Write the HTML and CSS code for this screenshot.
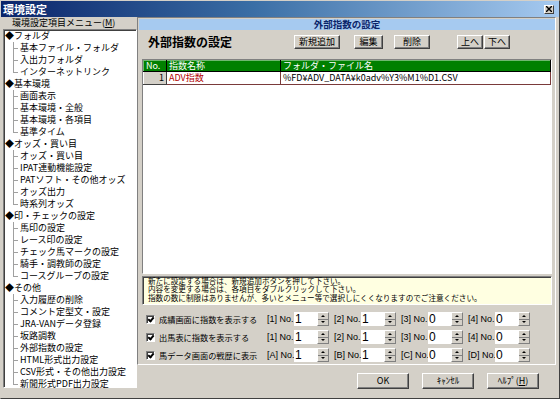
FILE: index.html
```html
<!DOCTYPE html>
<html lang="ja">
<head>
    <meta charset="UTF-8">
    <title>環境設定</title>
    <link rel="stylesheet" href="styles.css">
</head>
<body>
    <div class="window">
        <div class="titlebar">
            <span class="title">環境設定</span>
            <span class="close"><svg width="6" height="6" viewBox="0 0 6 6"><path d="M0 0L6 6M6 0L0 6" stroke="#000" stroke-width="1.4"/></svg></span>
        </div>
        <div class="main">
            <div class="menu-col">
                <div class="menu-label">環境設定項目メニュー(<u>M</u>)</div>
                <ul class="tree">
                    <li class="group">◆フォルダ
                        <ul>
                            <li>基本ファイル・フォルダ</li>
                            <li>入出力フォルダ</li>
                            <li>インターネットリンク</li>
                        </ul>
                    </li>
                    <li class="group">◆基本環境
                        <ul>
                            <li>画面表示</li>
                            <li>基本環境・全般</li>
                            <li>基本環境・各項目</li>
                            <li>基準タイム</li>
                        </ul>
                    </li>
                    <li class="group">◆オッズ・買い目
                        <ul>
                            <li>オッズ・買い目</li>
                            <li>IPAT連動機能設定</li>
                            <li>PATソフト・その他オッズ</li>
                            <li>オッズ出力</li>
                            <li>時系列オッズ</li>
                        </ul>
                    </li>
                    <li class="group">◆印・チェックの設定
                        <ul>
                            <li>馬印の設定</li>
                            <li>レース印の設定</li>
                            <li>チェック馬マークの設定</li>
                            <li>騎手・調教師の設定</li>
                            <li>コースグループの設定</li>
                        </ul>
                    </li>
                    <li class="group">◆その他
                        <ul>
                            <li>入力履歴の削除</li>
                            <li>コメント定型文・設定</li>
                            <li>JRA-VANデータ登録</li>
                            <li>坂路調教</li>
                            <li>外部指数の設定</li>
                            <li>HTML形式出力設定</li>
                            <li>CSV形式・その他出力設定</li>
                            <li>新聞形式PDF出力設定</li>
                        </ul>
                    </li>
                </ul>
            </div>

            <div class="content-col">
                <div class="panel">
                    <div class="panel-head">外部指数の設定</div>
                    <div class="toolbar">
                        <h1>外部指数の設定</h1>
                        <button class="btn btn-add">新規追加</button>
                        <button class="btn btn-edit">編集</button>
                        <button class="btn btn-del">削除</button>
                        <button class="btn btn-up">上へ</button>
                        <button class="btn btn-down">下へ</button>
                    </div>
                    <div class="list">
                        <table>
                            <tr class="head">
                                <th class="c-no">No.</th>
                                <th class="c-name">指数名称</th>
                                <th class="c-path">フォルダ・ファイル名</th>
                            </tr>
                            <tr class="row">
                                <td class="c-no">1</td>
                                <td class="c-name">ADV指数</td>
                                <td class="c-path">%FD¥ADV_DATA¥k0adv%Y3%M1%D1.CSV</td>
                            </tr>
                        </table>
                    </div>
                    <div class="note">
                        新たに設定する場合は、新規追加ボタンを押して下さい。<br>
                        内容を変更する場合は、各項目をダブルクリックして下さい。<br>
                        指数の数に制限はありませんが、多いとメニュー等で選択しにくくなりますのでご注意ください。
                    </div>
                    <div class="opts">
                        <div class="opt-row">
                            <label class="opt-label"><span class="check"></span>成績画面に指数を表示する</label>
                            <span class="spin-group"><span class="spin-label">[1] No.</span><span class="num">1</span><span class="spin"></span></span>
                            <span class="spin-group"><span class="spin-label">[2] No.</span><span class="num">1</span><span class="spin"></span></span>
                            <span class="spin-group"><span class="spin-label">[3] No.</span><span class="num">0</span><span class="spin"></span></span>
                            <span class="spin-group"><span class="spin-label">[4] No.</span><span class="num">0</span><span class="spin"></span></span>
                        </div>
                        <div class="opt-row">
                            <label class="opt-label"><span class="check"></span>出馬表に指数を表示する</label>
                            <span class="spin-group"><span class="spin-label">[1] No.</span><span class="num">1</span><span class="spin"></span></span>
                            <span class="spin-group"><span class="spin-label">[2] No.</span><span class="num">1</span><span class="spin"></span></span>
                            <span class="spin-group"><span class="spin-label">[3] No.</span><span class="num">0</span><span class="spin"></span></span>
                            <span class="spin-group"><span class="spin-label">[4] No.</span><span class="num">0</span><span class="spin"></span></span>
                        </div>
                        <div class="opt-row">
                            <label class="opt-label"><span class="check"></span>馬データ画面の戦歴に表示</label>
                            <span class="spin-group"><span class="spin-label">[A] No.</span><span class="num">1</span><span class="spin"></span></span>
                            <span class="spin-group"><span class="spin-label">[B] No.</span><span class="num">1</span><span class="spin"></span></span>
                            <span class="spin-group"><span class="spin-label">[C] No.</span><span class="num">0</span><span class="spin"></span></span>
                            <span class="spin-group"><span class="spin-label">[D] No.</span><span class="num">0</span><span class="spin"></span></span>
                        </div>
                    </div>
                </div>
                <div class="actions">
                    <button class="btn btn-dlg">OK</button>
                    <button class="btn btn-dlg">ｷｬﾝｾﾙ</button>
                    <button class="btn btn-dlg">ﾍﾙﾌﾟ(<u>H</u>)</button>
                </div>
            </div>
        </div>
    </div>
</body>
</html>
```

FILE: styles.css
```css
body {
    margin: 0;
    background-color: #d4d0c8;
    font-family: "Noto Sans CJK JP", "Liberation Sans", sans-serif;
    color: #000;
}
.window {
    width: 560px;
    height: 399px;
    box-sizing: border-box;
    border: 1px solid;
    border-color: #d4d0c8 #404040 #404040 #d4d0c8;
    background-color: #d4d0c8;
    overflow: hidden;
}
.titlebar {
    height: 16px;
    display: flex;
    align-items: center;
    justify-content: space-between;
    padding: 0 5px 0 2px;
    background: linear-gradient(to right, #0a246a, #3a6ea5 45%, #a6caf0);
}
.title {
    color: #fff;
    font-size: 11px;
    font-weight: bold;
    line-height: 16px;
}
.close {
    width: 10px;
    height: 9px;
    box-sizing: border-box;
    display: flex;
    align-items: center;
    justify-content: center;
    background-color: #d4d0c8;
    border: 1px solid;
    border-color: #fff #404040 #404040 #fff;
}
.main {
    display: flex;
    padding: 0 3px 0 2px;
}
.menu-col {
    width: 134px;
    display: flex;
    flex-direction: column;
}
.menu-label {
    height: 12px;
    line-height: 12px;
    font-size: 9px;
    padding-left: 9px;
}
.tree {
    list-style: none;
    margin: 0;
    padding: 0 0 0 1px;
    height: 359px;
    box-sizing: border-box;
    background-color: #fff;
    border: 1px solid;
    border-color: #808080 #fff #fff #808080;
    box-shadow: inset 1px 1px 0 #404040;
    font-size: 9px;
    line-height: 12px;
    white-space: nowrap;
}
.tree ul {
    list-style: none;
    margin: 0;
    padding: 0 0 0 15px;
}
.tree ul li {
    position: relative;
}
.tree ul li::before {
    content: "";
    position: absolute;
    left: -7px;
    top: 0;
    height: 100%;
    border-left: 1px solid #a0a0a0;
}
.tree ul li:last-child::before {
    height: 6px;
}
.tree ul li::after {
    content: "";
    position: absolute;
    left: -7px;
    top: 6px;
    width: 5px;
    border-top: 1px solid #a0a0a0;
}
.content-col {
    flex: 1;
    display: flex;
    flex-direction: column;
}
.panel {
    height: 348px;
    box-sizing: border-box;
    border: 1px solid;
    border-color: #808080 #fff #fff #808080;
    padding: 1px 0 0 1px;
    display: flex;
    flex-direction: column;
}
.panel-head {
    height: 11px;
    line-height: 11px;
    background-color: #a6caf0;
    color: #0a246a;
    font-size: 9.5px;
    font-weight: bold;
    text-align: center;
}
.toolbar {
    display: flex;
    align-items: center;
    height: 24px;
    padding-left: 9px;
}
.toolbar h1 {
    margin: 0;
    font-size: 12px;
    font-weight: bold;
    width: 146px;
}
.btn {
    font-family: "Noto Sans CJK JP", "Liberation Sans", sans-serif;
    font-size: 9px;
    height: 14px;
    padding: 0;
    line-height: 12px;
    background-color: #d4d0c8;
    border: 1px solid;
    border-color: #fff #404040 #404040 #fff;
    box-shadow: inset -1px -1px 0 #808080;
    color: #000;
}
.btn-add { width: 46px; }
.btn-edit { width: 29px; margin-left: 14px; }
.btn-del { width: 36px; margin-left: 11px; }
.btn-up { width: 26px; margin-left: 27px; }
.btn-down { width: 26px; margin-left: 1px; }
.list {
    margin: 6px 3px 0 3px;
    height: 219px;
    box-sizing: border-box;
    background-color: #fff;
    border: 1px solid;
    border-color: #808080 #fff #fff #808080;
}
.list table {
    border-collapse: collapse;
    font-size: 9px;
    line-height: 10px;
}
.head th {
    background-color: #008000;
    color: #fff;
    font-weight: normal;
    text-align: left;
    padding: 0 2px;
    border: 1px solid;
    border-color: #6fb86f #000 #000 #6fb86f;
    height: 11px;
    box-sizing: border-box;
}
.c-no { width: 18px; }
.c-name { width: 109px; }
.c-path { width: 265px; }
.row td {
    height: 12px;
    padding: 0 2px;
    border: 1px solid #7a3a3a;
    white-space: nowrap;
}
.row .c-no {
    background-color: #d4d0c8;
    text-align: right;
    border-color: #fff #404040 #404040 #fff;
}
.row .c-name {
    color: #b00000;
}
.note {
    margin: 2px 3px 0 3px;
    height: 30px;
    box-sizing: border-box;
    background-color: #ffffe1;
    border: 1px solid;
    border-color: #808080 #fff #fff #808080;
    box-shadow: inset 1px 1px 0 #404040;
    padding: 0 0 0 5px;
    font-size: 7.6px;
    line-height: 8.6px;
    white-space: nowrap;
}
.opts {
    padding: 5px 0 0 7px;
}
.opt-row {
    display: flex;
    align-items: center;
    height: 18px;
}
.opt-label {
    width: 121px;
    display: flex;
    align-items: center;
    font-size: 8.2px;
    white-space: nowrap;
}
.check {
    width: 9px;
    height: 9px;
    box-sizing: border-box;
    margin-right: 4px;
    background-color: #fff;
    border: 1px solid;
    border-color: #808080 #fff #fff #808080;
    box-shadow: inset 1px 1px 0 #404040;
    position: relative;
}
.check::after {
    content: "";
    position: absolute;
    left: 2px;
    top: 0px;
    width: 2px;
    height: 4px;
    border: solid #000;
    border-width: 0 2px 2px 0;
    transform: rotate(40deg);
}
.spin-group {
    display: flex;
    align-items: center;
    width: 67px;
}
.spin-label {
    width: 27px;
    font-family: "Liberation Sans", sans-serif;
    font-size: 9px;
    white-space: nowrap;
}
.num {
    width: 23px;
    height: 14px;
    background-color: #fff;
    font-family: "Liberation Sans", sans-serif;
    font-size: 12px;
    line-height: 14px;
    padding-left: 1px;
    box-sizing: border-box;
}
.spin {
    width: 12px;
    height: 14px;
    box-sizing: border-box;
    background:
        linear-gradient(#808080, #808080) 0 6px / 100% 1px no-repeat,
        #d4d0c8;
    border: 1px solid;
    border-color: #fff #808080 #808080 #fff;
    position: relative;
}
.spin::before,
.spin::after {
    content: "";
    position: absolute;
    left: 3px;
    border-left: 2px solid transparent;
    border-right: 2px solid transparent;
}
.spin::before {
    top: 2px;
    border-bottom: 2px solid #000;
}
.spin::after {
    top: 8px;
    border-top: 2px solid #000;
}
.actions {
    display: flex;
    justify-content: flex-end;
    gap: 13px;
    padding: 8px 17px 0 0;
}
.btn-dlg {
    width: 52px;
    height: 16px;
    font-size: 9px;
}
```
